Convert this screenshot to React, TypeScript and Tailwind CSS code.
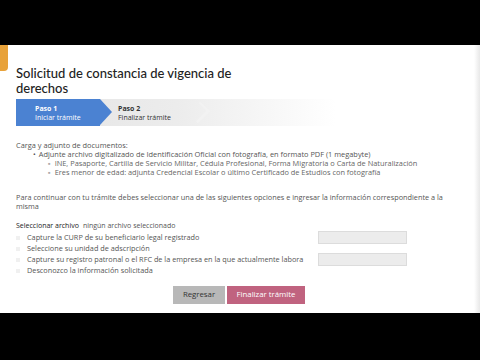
export default function App() {
  const options = [
    "Capture la CURP de su beneficiario legal registrado",
    "Seleccione su unidad de adscripción",
    "Capture su registro patronal o el RFC de la empresa en la que actualmente labora",
    "Desconozco la información solicitada",
  ];

  return (
    <div className="w-[480px] h-[360px] bg-black flex flex-col overflow-hidden" style={{ fontFamily: "'Open Sans', sans-serif" }}>
      <div className="h-[45px] shrink-0" />
      <div className="h-[268px] bg-white relative flex">
        {/* side tab */}
        <div className="absolute left-0 top-0 w-[8px] h-[26px] bg-[#e8a23a] rounded-br-sm" />
        <div className="flex-1 pl-[16px] pr-[10px] pt-[21px] text-[#444]">
          <h1 className="text-[13px] leading-[15px] text-[#222] font-medium" style={{ fontFamily: "Lato, sans-serif" }}>
            <div>Solicitud de constancia de vigencia de</div>
            <div>derechos</div>
          </h1>

          {/* stepper */}
          <div className="mt-[3px] flex h-[27px] w-[320px] bg-gradient-to-r from-[#e4e4e4] via-[#ececec] to-white">
            <div className="relative w-[84px] bg-[#4b82d2] pl-[19px] pt-[5px] text-white text-[7px] leading-[9px]">
              <div className="font-bold">Paso 1</div>
              <div>Iniciar trámite</div>
              <div className="absolute right-[-12px] top-0 w-0 h-0 border-y-[13.5px] border-y-transparent border-l-[12px] border-l-[#4b82d2]" />
            </div>
            <div className="relative pl-[18px] pt-[5px] text-[#333] text-[7px] leading-[9px] w-[100px]">
              <div className="font-bold">Paso 2</div>
              <div>Finalizar trámite</div>
              <div className="absolute right-[-6px] top-[2px] w-[14px] h-[23px] border-r-[3px] border-t-[3px] border-[#f4f4f4] rotate-45 scale-y-75 opacity-70" />
            </div>
          </div>

          <div className="mt-[15px] text-[7.4px] leading-[9px] text-[#555]">
            <div>Carga y adjunto de documentos:</div>
            <ul className="pl-[17px]">
              <li className="flex gap-[3px]">
                <span>•</span>
                <span>Adjunte archivo digitalizado de Identificación Oficial con fotografía, en formato PDF (1 megabyte)</span>
              </li>
            </ul>
            <ul className="pl-[32px] text-[#666]">
              <li className="flex gap-[4px]">
                <span className="text-[#aaa]">▪</span>
                <span>INE, Pasaporte, Cartilla de Servicio Militar, Cédula Profesional, Forma Migratoria o Carta de Naturalización</span>
              </li>
              <li className="flex gap-[4px]">
                <span className="text-[#aaa]">▪</span>
                <span>Eres menor de edad: adjunta Credencial Escolar o último Certificado de Estudios con fotografía</span>
              </li>
            </ul>
          </div>

          <p className="mt-[16px] text-[7.3px] leading-[9px] text-[#555] w-[448px]">
            Para continuar con tu trámite debes seleccionar una de las siguientes opciones e ingresar la información correspondiente a la misma
          </p>

          <div className="mt-[10px] text-[7px] leading-[9px] text-[#555] flex gap-[4px]">
            <span className="text-[#222]">Seleccionar archivo</span>
            <span>ningún archivo seleccionado</span>
          </div>

          <div className="mt-[2px] flex flex-col text-[7.3px] text-[#555]">
            {options.map((o, i) => (
              <div key={i} className="h-[11px] flex items-center">
                <span className="w-[4px] h-[4px] bg-[#f0f0f0] mr-[7px]" />
                <span>{o}</span>
                {(i === 0 || i === 2) && (
                  <span className="ml-auto mr-[57px] w-[89px] h-[13px] bg-[#ececec] border border-[#dcdcdc]" />
                )}
              </div>
            ))}
          </div>

          <div className="mt-[10px] flex gap-[2px] ml-[157px]">
            <button className="w-[52px] h-[18px] bg-[#b8b8b8] text-[#333] text-[7.8px]">Regresar</button>
            <button className="w-[78px] h-[18px] bg-[#c0637f] text-white text-[7.8px]">Finalizar trámite</button>
          </div>
        </div>
        <div className="w-[8px] bg-gradient-to-r from-white to-[#e8e8e8]" />
      </div>
      <div className="flex-1" />
    </div>
  );
}
